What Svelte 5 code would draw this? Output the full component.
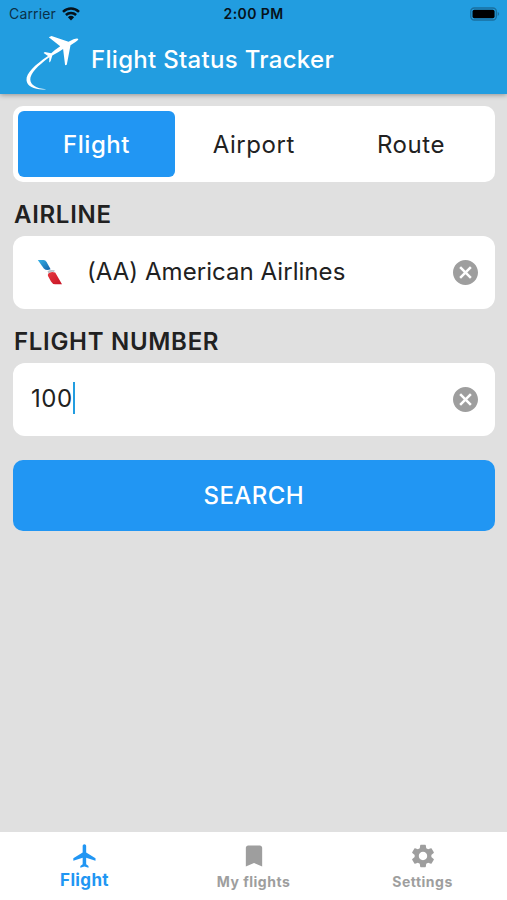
<script>
  let modes = ['Flight', 'Airport', 'Route'];
  let mode = $state('Flight');
  let airline = $state('(AA) American Airlines');
  let flightNumber = $state('100');

  const tabs = [
    { id: 'flight', label: 'Flight' },
    { id: 'saved', label: 'My flights' },
    { id: 'settings', label: 'Settings' }
  ];
  let activeTab = $state('flight');
</script>

{#snippet clearButton(onclick)}
  <button class="clear" aria-label="Clear" {onclick}>
    <svg viewBox="2 2 20 20">
      <path d="M12 2C6.47 2 2 6.47 2 12s4.47 10 10 10 10-4.47 10-10S17.53 2 12 2zm5 13.59L15.59 17 12 13.41 8.41 17 7 15.59 10.59 12 7 8.41 8.41 7 12 10.59 15.59 7 17 8.41 13.41 12 17 15.59z" />
    </svg>
  </button>
{/snippet}

<div class="screen">
  <header>
    <div class="status">
      <div class="carrier">
        <span>Carrier</span>
        <svg class="wifi" viewBox="0 0 18 14">
          <path d="M1 4.8C5.6.4 12.4.4 17 4.8M3.9 8C6.8 5.2 11.2 5.2 14.1 8" />
          <path class="dot" d="M5.9 10.2Q9 7.4 12.1 10.2L9 13.5z" />
        </svg>
      </div>
      <span class="time">2:00 PM</span>
      <svg class="battery" viewBox="0 0 31 14">
        <rect class="shell" x=".8" y=".8" width="26.4" height="12.4" rx="3.6" />
        <rect x="2.6" y="2.6" width="22.8" height="8.8" rx="1.8" />
        <path class="cap" d="M28.6 4.8Q31.6 7 28.6 9.2z" />
      </svg>
    </div>
    <div class="title">
      <svg class="logo" viewBox="0 0 66 66">
        <path d="M58.4 9Q57.6 7.9 53.5 9.2L48.5 11.8L31.5 6.1L28.8 7.3L40.2 16.2Q35 19.6 31.2 23.3L24.8 21.9L23.6 23L28 26C14.5 35 6 43.5 6.5 50.2C7 57 16 60.2 26.2 59.2C16 58.5 10.5 54.8 10.3 49.5C10 43.5 18 35.5 29.3 27.2L29.2 32.4L30.6 31.2L32.3 25.6Q38 22.6 43.1 19L45.1 35.2L46.8 34.7L50.5 15.2L55.5 12Q58.5 10 58.4 9z" />
      </svg>
      <h1>Flight Status Tracker</h1>
    </div>
  </header>

  <main>
    <div class="segments">
      {#each modes as item}
        <button class:selected={mode === item} onclick={() => (mode = item)}>{item}</button>
      {/each}
    </div>

    <h2>AIRLINE</h2>
    <div class="field">
      <svg class="airline-logo" viewBox="0 0 26 28">
        <defs>
          <linearGradient id="tail-blue" x1="0" y1="0" x2="1" y2="1">
            <stop offset="0" stop-color="#35b2e8" />
            <stop offset="1" stop-color="#1262a8" />
          </linearGradient>
          <linearGradient id="tail-red" x1="0" y1="0" x2="1" y2="1">
            <stop offset="0" stop-color="#e5383f" />
            <stop offset="1" stop-color="#c81426" />
          </linearGradient>
        </defs>
        <path fill="url(#tail-blue)" d="M.8 2H6.5Q8.5 2.2 9.6 4L13.6 11.2Q9.5 13.2 6.8 10.4z" />
        <path fill="#b8c2c8" d="M10.5 13.2Q13 11.2 17.8 12.3L17 14Q13.5 13 11.5 15.4z" />
        <path fill="url(#tail-red)" d="M11.4 15.5Q13.6 13 18.2 14.4L25 26.3H18.2Q15.4 26 14 23.4L11 18Q10.5 16.5 11.4 15.5z" />
      </svg>
      <span class="value">{airline}</span>
      {@render clearButton(() => (airline = ''))}
    </div>

    <h2>FLIGHT NUMBER</h2>
    <div class="field number">
      <span class="value">{flightNumber}</span>
      <i class="caret"></i>
      {@render clearButton(() => (flightNumber = ''))}
    </div>

    <button class="search">SEARCH</button>
  </main>

  <nav>
    {#each tabs as tab}
      <button class:active={activeTab === tab.id} onclick={() => (activeTab = tab.id)}>
        <svg viewBox="0 0 24 24">
          {#if tab.id === 'flight'}
            <path d="M21 16v-2l-8-5V3.5c0-.83-.67-1.5-1.5-1.5S10 2.67 10 3.5V9l-8 5v2l8-2.5V19l-2 1.5V22l3.5-1 3.5 1v-1.5L13 19v-5.5l8 2.5z" />
          {:else if tab.id === 'saved'}
            <path d="M17 3H7c-1.1 0-1.99.9-1.99 2L5 21l7-3 7 3V5c0-1.1-.9-2-2-2z" />
          {:else}
            <path d="M19.14 12.94c.04-.3.06-.61.06-.94 0-.32-.02-.64-.07-.94l2.03-1.58c.18-.14.23-.41.12-.61l-1.92-3.32c-.12-.22-.37-.29-.59-.22l-2.39.96c-.5-.38-1.03-.7-1.62-.94l-.36-2.54c-.04-.24-.24-.41-.48-.41h-3.84c-.24 0-.43.17-.47.41l-.36 2.54c-.59.24-1.13.57-1.62.94l-2.39-.96c-.22-.08-.47 0-.59.22L2.74 8.87c-.12.21-.08.47.12.61l2.03 1.58c-.05.3-.09.63-.09.94s.02.64.07.94l-2.03 1.58c-.18.14-.23.41-.12.61l1.92 3.32c.12.22.37.29.59.22l2.39-.96c.5.38 1.03.7 1.62.94l.36 2.54c.05.24.24.41.48.41h3.84c.24 0 .44-.17.47-.41l.36-2.54c.59-.24 1.13-.56 1.62-.94l2.39.96c.22.08.47 0 .59-.22l1.92-3.32c.12-.22.07-.47-.12-.61l-2.01-1.58zM12 15.6c-1.98 0-3.6-1.62-3.6-3.6s1.62-3.6 3.6-3.6 3.6 1.62 3.6 3.6-1.62 3.6-3.6 3.6z" />
          {/if}
        </svg>
        <span>{tab.label}</span>
      </button>
    {/each}
  </nav>
</div>

<style>
:global(body) {
  margin: 0;
}
.screen {
  display: flex;
  flex-direction: column;
  height: 900px;
  background: #e0e0e0;
  font-family: Inter, "Liberation Sans", sans-serif;
  color: #212121;
}
button {
  font: inherit;
  letter-spacing: inherit;
  color: inherit;
  border: none;
  padding: 0;
  background: none;
  cursor: pointer;
}
svg {
  display: block;
  fill: currentColor;
}
header {
  height: 94px;
  background: #229de0;
  box-shadow: 0 1px 5px rgba(0, 0, 0, 0.35);
}
.status {
  display: grid;
  grid-template-columns: 1fr auto 1fr;
  align-items: center;
  height: 27px;
  padding: 0 7px 0 9px;
  color: #06121a;
}
.carrier {
  display: flex;
  align-items: center;
  gap: 6px;
  font-size: 14px;
  letter-spacing: 0.15px;
  color: #0a3149;
}
.wifi {
  width: 18px;
  height: 14px;
  fill: none;
  stroke: #06121a;
  stroke-width: 2.5;
}
.wifi .dot {
  fill: #06121a;
  stroke: none;
}
.time {
  margin-left: -2px;
  font-size: 14px;
  font-weight: 600;
  letter-spacing: 0.4px;
}
.battery {
  width: 30px;
  height: 14px;
  justify-self: end;
  fill: #000;
}
.battery .shell {
  fill: none;
  stroke: #1a6f9e;
  stroke-width: 1.4;
}
.battery .cap {
  fill: #1a6f9e;
}
.title {
  display: flex;
  align-items: center;
  height: 66px;
  padding: 3px 0 0 20px;
  box-sizing: border-box;
  color: #fff;
}
.logo {
  width: 66px;
  height: 66px;
  margin-top: 3px;
}
h1 {
  margin: 0 0 5px 5px;
  font-size: 24px;
  font-weight: 500;
  letter-spacing: 0.3px;
}
main {
  flex: 1;
  padding: 12px 12.5px 0 13px;
}
.segments {
  display: grid;
  grid-template-columns: repeat(3, 1fr);
  height: 76px;
  padding: 5px;
  box-sizing: border-box;
  background: #fff;
  border-radius: 10px;
  font-size: 24px;
  letter-spacing: 0.55px;
}
.segments button {
  border-radius: 6px;
}
.segments .selected {
  background: #2196f3;
  color: #fff;
  font-weight: 500;
}
h2 {
  margin: 0;
  height: 53.5px;
  padding: 13px 0 0 1px;
  box-sizing: border-box;
  font-size: 24px;
  line-height: 40px;
  font-weight: 600;
  letter-spacing: 0.7px;
}
.field {
  display: flex;
  align-items: center;
  height: 73.5px;
  padding: 0 17px 0 24px;
  box-sizing: border-box;
  background: #fff;
  border-radius: 12px;
  font-size: 24px;
  letter-spacing: 0.05px;
}
.field.number {
  padding-left: 18px;
  letter-spacing: 0.5px;
}
.airline-logo {
  width: 26px;
  height: 28px;
  margin-right: 24px;
}
.value {
  padding-bottom: 2px;
}
.caret {
  width: 2.5px;
  height: 32px;
  margin-bottom: 2px;
  background: #229de0;
}
.clear {
  margin-left: auto;
  color: #9e9e9e;
}
.clear svg {
  width: 25px;
  height: 25px;
}
.search {
  width: 100%;
  height: 71px;
  margin-top: 24px;
  border-radius: 10px;
  background: #2196f3;
  color: #fff;
  font-size: 24px;
  font-weight: 500;
  letter-spacing: 0.4px;
}
nav {
  display: grid;
  grid-template-columns: repeat(3, 1fr);
  height: 68px;
  background: #fff;
}
nav button {
  display: flex;
  flex-direction: column;
  align-items: center;
  padding-top: 10px;
  font-size: 14px;
  font-weight: 700;
  line-height: 23px;
  letter-spacing: 0.5px;
  color: #9e9e9e;
}
nav svg {
  width: 28px;
  height: 28px;
}
nav .active {
  color: #2196f3;
  font-size: 17px;
  line-height: 21px;
  letter-spacing: 0.35px;
}
</style>
